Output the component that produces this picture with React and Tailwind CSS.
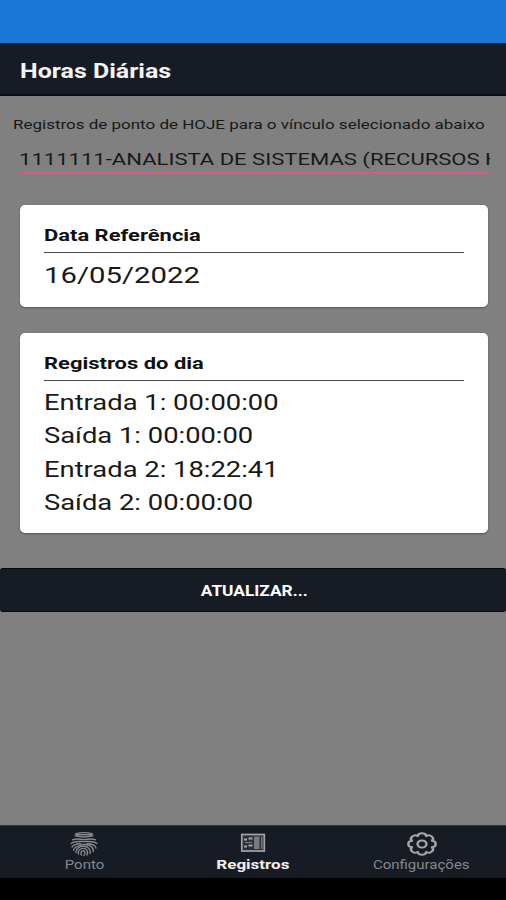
const registros = [
  { label: "Entrada 1", hora: "00:00:00" },
  { label: "Saída 1", hora: "00:00:00" },
  { label: "Entrada 2", hora: "18:22:41" },
  { label: "Saída 2", hora: "00:00:00" },
];

const PontoIcon = () => (
  <svg viewBox="0 0 28 26" className="h-[26px] w-[28px]" fill="none" stroke="currentColor" strokeWidth="1.4" strokeLinecap="round">
    <path d="M5.500 3Q14 .2 22.500 3M5 4.600Q14 7.400 23 4.600M7 3.800h14" />
    <path d="M2.500 8.800C6.500 6.800 10 8.600 14 8.600s7.500-1.800 11.500.2" />
    <path d="M1.200 12.500C4.500 9.600 9 10.600 14 10.600s9.500-1 12.800 1.900" />
    <path d="M2 16C4 13 7.500 12.800 10.500 12.800M17 12.800c4.500 0 8 .8 9 4.200" />
    <path d="M3.500 19.200C4.500 16 7 15 9.500 14.600c3-1.600 8.500-1.600 11.500.8 2 1.600 2.500 3.400 2.200 5.100" />
    <path d="M5.800 21.500c.4-4.500 4-6.300 8-6.300 4.500 0 7 3.300 6.200 7.300" />
    <path d="M8.500 23c-1-3.300 1.500-5.800 5.200-5.600 3.500.2 4.500 3 3.300 6.600" />
    <path d="M11.500 24.200c-1.300-2.500-.3-4.600 1.700-4.500 2 .1 2.300 1.800.8 4.800" />
  </svg>
);

const RegistrosIcon = () => (
  <svg viewBox="0 0 26 20" className="h-[20px] w-[26px]" fill="none">
    <rect x="1.800" y="1.500" width="22.500" height="16.500" fill="#2b3037" stroke="#a3a5a9" strokeWidth="1.700" />
    <path d="M4 6.500h3M8.500 5.500h4M4 13.500h3M8.500 12.500h4" stroke="#a3a5a9" strokeWidth="2" />
    <path d="M5 9.500h7" stroke="#777b80" strokeWidth="1.200" />
    <rect x="14" y="3.500" width="5.500" height="12.500" fill="#777b80" />
    <path d="M21.800 3.500v12.500" stroke="#777b80" strokeWidth="1.500" />
  </svg>
);

const ConfigIcon = () => (
  <svg viewBox="0 0 32 26" className="h-[26px] w-[32px]" fill="none" stroke="#a3a5a9" strokeWidth="1.9" strokeLinecap="round">
    <g transform="translate(16 13) scale(1.27 1)">
      {[0, 45, 90, 135, 180, 225, 270, 315].map((angle) => (
        <path key={angle} d="M8 -3.300C11.700 -3 11.700 3 8 3.300" transform={`rotate(${angle})`} />
      ))}
      <circle r="3.500" />
    </g>
  </svg>
);

const Card = ({ title, children, className }) => (
  <section className={`ml-5 mr-[18px] rounded-[5px] bg-white px-6 shadow-[0_1px_2px_rgba(0,0,0,0.35)] ${className}`}>
    <h2 className="flex h-[48px] items-end border-b border-[#444] pb-[5px] text-[17px] font-bold leading-6 text-[#111]">
      <span className="origin-left scale-x-[1.29] whitespace-nowrap">{title}</span>
    </h2>
    {children}
  </section>
);

const App = () => {
  return (
    <div className="flex h-[900px] w-[506px] flex-col overflow-hidden bg-[#808080] font-['Roboto',sans-serif] text-[#181818]">
      <div className="h-[43px] shrink-0 bg-[#1976d5]" />

      <header className="flex h-[53px] shrink-0 items-center border-b-2 border-[#070b13] bg-[#171b23] px-5 pt-[5px]">
        <h1 className="origin-left scale-x-[1.25] whitespace-nowrap text-[20px] font-bold text-[#f5f5f5]">
          Horas Diárias
        </h1>
      </header>

      <main className="flex flex-1 flex-col">
        <p className="ml-[13px] mt-[18px] w-fit origin-left scale-x-[1.258] whitespace-nowrap text-[13.5px] leading-5">
          Registros de ponto de HOJE para o vínculo selecionado abaixo
        </p>

        <div className="ml-[19px] mr-4 mt-[12px] h-[28px] overflow-hidden border-b-2 border-[#d65a86] pt-px">
          <p className="w-fit origin-left scale-x-[1.297] whitespace-nowrap text-[17px] leading-[25px]">
            1111111-ANALISTA DE SISTEMAS (RECURSOS H
          </p>
        </div>

        <Card title="Data Referência" className="mt-[31px] h-[102px]">
          <p className="mt-[8px] w-fit origin-left scale-x-[1.302] text-[22.5px] leading-[28px]">16/05/2022</p>
        </Card>

        <Card title="Registros do dia" className="mt-[26px] h-[200px]">
          <ul className="mt-[4.5px]">
            {registros.map(({ label, hora }) => (
              <li key={label} className="w-fit origin-left scale-x-[1.272] whitespace-nowrap text-[21.5px] leading-[33.6px]">
                {label}: {hora}
              </li>
            ))}
          </ul>
        </Card>

        <button className="mt-[35px] flex h-[44px] w-full items-center justify-center rounded-[3px] border-y border-[#050812] bg-[#171b23] pt-[2px] text-[14px] font-bold text-white">
          <span className="translate-x-[1px] scale-x-[1.235]">ATUALIZAR...</span>
        </button>
      </main>

      <nav className="grid h-[53px] shrink-0 grid-cols-3 border-t border-[#343941] bg-[#171b23] text-[12.5px] leading-4 text-[#85888d]">
        <div className="flex flex-col items-center pt-[5px]">
          <PontoIcon />
          <span className="scale-x-[1.2]">Ponto</span>
        </div>
        <div className="flex flex-col items-center pt-[7px]">
          <RegistrosIcon />
          <span className="mt-[4px] scale-x-[1.36] font-bold text-[#f0f0f0]">Registros</span>
        </div>
        <div className="flex flex-col items-center pt-[5px]">
          <ConfigIcon />
          <span className="scale-x-[1.2]">Configurações</span>
        </div>
      </nav>
      <div className="h-[22px] shrink-0 bg-black" />
    </div>
  );
};

export default App;
